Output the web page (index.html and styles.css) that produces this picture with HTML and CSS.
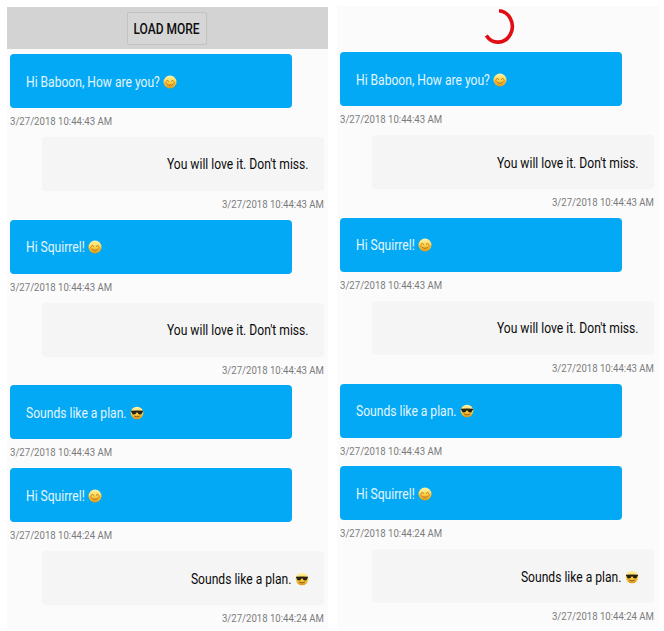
FILE: index.html
```html
<!DOCTYPE html>
<html lang="en">
<head>
<meta charset="utf-8">
<title>Chat load more</title>
<link rel="stylesheet" href="styles.css">
</head>
<body>
<svg class="defs" aria-hidden="true">
  <defs>
    <linearGradient id="face" x1="0" y1="0" x2="0" y2="1">
      <stop offset="0" stop-color="#fff3b0"/>
      <stop offset=".5" stop-color="#fcd549"/>
      <stop offset="1" stop-color="#dc9418"/>
    </linearGradient>
    <symbol id="smile" viewBox="0 0 14 14">
      <circle cx="7" cy="7" r="6.5" fill="url(#face)"/>
      <path d="M3 6.3q1.4-1.9 2.8 0M8.2 6.3q1.4-1.9 2.8 0M3.7 8.9q3.3 3.2 6.6 0" fill="none" stroke="#a8661a" stroke-width=".8" stroke-linecap="round"/>
      <circle cx="2.8" cy="8.2" r="1.1" fill="#f39a2b"/>
      <circle cx="11.2" cy="8.2" r="1.1" fill="#f39a2b"/>
    </symbol>
    <symbol id="cool" viewBox="0 0 14 14">
      <circle cx="7" cy="7" r="6.3" fill="url(#face)"/>
      <path d="M1 4.800q6-.7 12 0v1q-.7.2-.9 1.200-.4 1.600-2.100 1.600-1.900 0-2.500-2h-1q-.6 2-2.500 2T1.900 7Q1.700 6 1 5.800z" fill="#2a2117"/>
      <path d="M4.500 10.300q2.500 1.500 5 0" fill="none" stroke="#945611" stroke-width=".9" stroke-linecap="round"/>
    </symbol>
  </defs>
</svg>
<main class="screens">
  <section class="screen screen-button">
    <header class="load-bar"><button class="load-button"><span class="tall">LOAD MORE</span></button></header>
    <div class="messages">
      <article class="message incoming"><div class="bubble"><span class="tall">Hi Baboon, How are you?</span><svg class="emoji"><use href="#smile"/></svg></div><time class="stamp"><span class="tall">3/27/2018 10:44:43 AM</span></time></article>
      <article class="message outgoing"><div class="bubble"><span class="tall">You will love it. Don't miss.</span></div><time class="stamp"><span class="tall">3/27/2018 10:44:43 AM</span></time></article>
      <article class="message incoming"><div class="bubble"><span class="tall">Hi Squirrel!</span><svg class="emoji"><use href="#smile"/></svg></div><time class="stamp"><span class="tall">3/27/2018 10:44:43 AM</span></time></article>
      <article class="message outgoing"><div class="bubble"><span class="tall">You will love it. Don't miss.</span></div><time class="stamp"><span class="tall">3/27/2018 10:44:43 AM</span></time></article>
      <article class="message incoming"><div class="bubble"><span class="tall">Sounds like a plan.</span><svg class="emoji"><use href="#cool"/></svg></div><time class="stamp"><span class="tall">3/27/2018 10:44:43 AM</span></time></article>
      <article class="message incoming"><div class="bubble"><span class="tall">Hi Squirrel!</span><svg class="emoji"><use href="#smile"/></svg></div><time class="stamp"><span class="tall">3/27/2018 10:44:24 AM</span></time></article>
      <article class="message outgoing"><div class="bubble"><span class="tall">Sounds like a plan.</span><svg class="emoji"><use href="#cool"/></svg></div><time class="stamp"><span class="tall">3/27/2018 10:44:24 AM</span></time></article>
    </div>
  </section>
  <section class="screen screen-spinner">
    <header class="spinner-bar"><svg class="spinner" viewBox="0 0 36 40"><path d="M19 4.800A14.300 15.700 0 1 1 6.300 29.500" fill="none" stroke="#e00d15" stroke-width="3.600"/></svg></header>
    <div class="messages">
      <article class="message incoming"><div class="bubble"><span class="tall">Hi Baboon, How are you?</span><svg class="emoji"><use href="#smile"/></svg></div><time class="stamp"><span class="tall">3/27/2018 10:44:43 AM</span></time></article>
      <article class="message outgoing"><div class="bubble"><span class="tall">You will love it. Don't miss.</span></div><time class="stamp"><span class="tall">3/27/2018 10:44:43 AM</span></time></article>
      <article class="message incoming"><div class="bubble"><span class="tall">Hi Squirrel!</span><svg class="emoji"><use href="#smile"/></svg></div><time class="stamp"><span class="tall">3/27/2018 10:44:43 AM</span></time></article>
      <article class="message outgoing"><div class="bubble"><span class="tall">You will love it. Don't miss.</span></div><time class="stamp"><span class="tall">3/27/2018 10:44:43 AM</span></time></article>
      <article class="message incoming"><div class="bubble"><span class="tall">Sounds like a plan.</span><svg class="emoji"><use href="#cool"/></svg></div><time class="stamp"><span class="tall">3/27/2018 10:44:43 AM</span></time></article>
      <article class="message incoming"><div class="bubble"><span class="tall">Hi Squirrel!</span><svg class="emoji"><use href="#smile"/></svg></div><time class="stamp"><span class="tall">3/27/2018 10:44:24 AM</span></time></article>
      <article class="message outgoing"><div class="bubble"><span class="tall">Sounds like a plan.</span><svg class="emoji"><use href="#cool"/></svg></div><time class="stamp"><span class="tall">3/27/2018 10:44:24 AM</span></time></article>
    </div>
  </section>
</main>
</body>
</html>
```
FILE: styles.css
```css
* { box-sizing: border-box; }
body {
  margin: 0;
  background: #fff;
  font-family: Roboto, "Liberation Sans", sans-serif;
}
.defs { display: block; width: 0; height: 0; }
.screens {
  display: flex;
  gap: 9px;
  height: 631px;
  padding: 6px 5px 0 7px;
  overflow: hidden;
}
.screen { height: 622px; background: #fbfbfb; }
.screen-button { width: 321px; margin-top: 1px; }
.screen-spinner { width: 322px; }
.load-bar {
  display: flex;
  justify-content: center;
  align-items: center;
  height: 42px;
  margin-bottom: 5px;
  padding-right: 2px;
  background: #d3d3d3;
}
.load-button {
  width: 80px;
  height: 33px;
  padding: 1px 0 0;
  border: 1px solid #c2c2c2;
  border-radius: 2px;
  background: #d6d6d6;
  color: #0c0c0c;
  font: 500 12px Roboto, sans-serif;
  white-space: nowrap;
}
.spinner-bar {
  display: flex;
  justify-content: center;
  height: 46.2px;
  padding-right: 1px;
}
.spinner { width: 36px; height: 40px; }
.messages { padding: 0 4px 0 3px; }
.screen-spinner .messages { padding-right: 5px; }
.message {
  display: flex;
  flex-direction: column;
  height: 82.85px;
}
.outgoing { align-items: flex-end; }
.bubble {
  display: flex;
  align-items: center;
  width: 282px;
  height: 54px;
  padding: 1px 15.500px 0 16px;
  border-radius: 4px;
  font-size: 12.1px;
  white-space: nowrap;
}
.incoming .bubble { background: #03a9f4; color: #e3f5fe; }
.outgoing .bubble {
  justify-content: flex-end;
  background: #f5f5f5;
  color: #0a0a0a;
}
/* Narrow letterforms: small size stretched vertically. */
.tall { display: inline-block; transform: scaleY(1.18); }
.emoji { width: 14px; height: 14px; margin-left: 3px; }
.stamp {
  padding-top: 6px;
  color: #7b7b7b;
  font-size: 9.6px;
  line-height: 14px;
}
```
